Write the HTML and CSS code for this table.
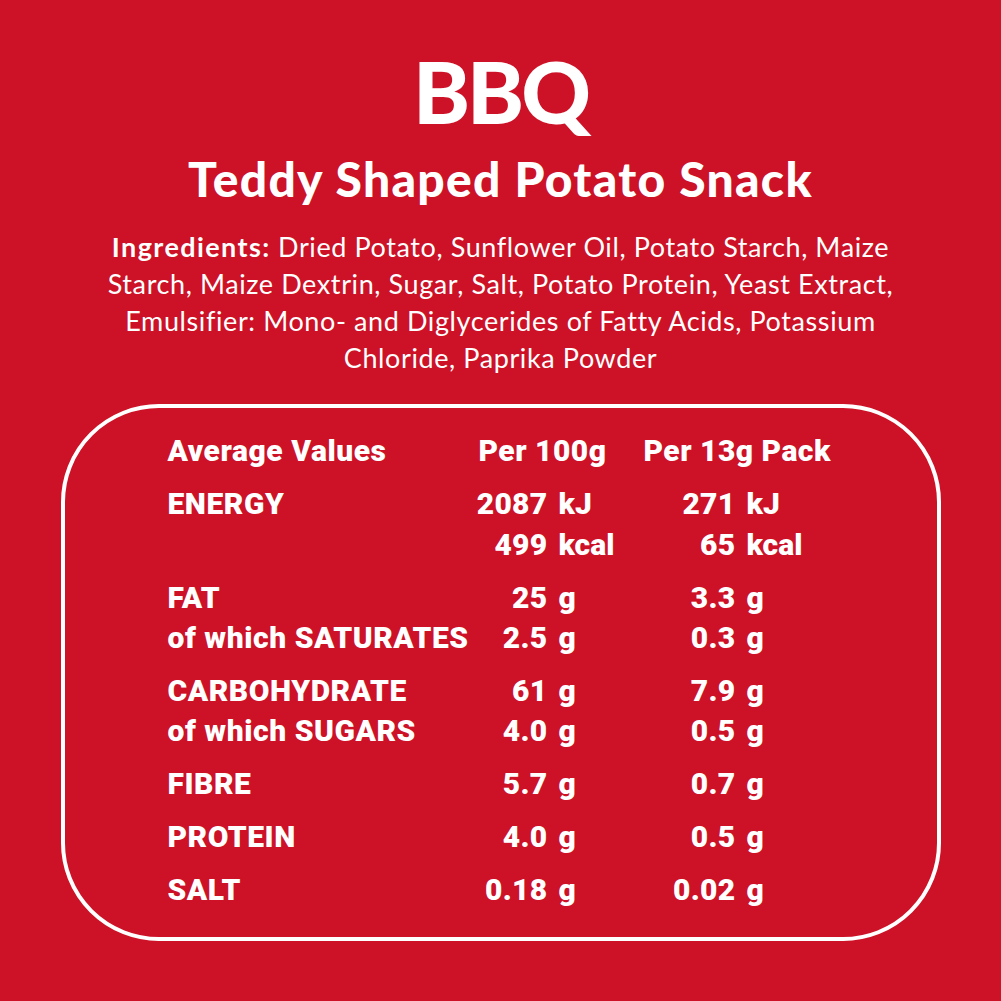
FILE: index.html
```html
<!DOCTYPE html>
<html lang="en">
<head>
<meta charset="utf-8">
<title>BBQ Teddy Shaped Potato Snack</title>
<link rel="stylesheet" href="styles.css">
</head>
<body>
<main class="page">
  <h1 class="title">BBQ</h1>
  <h2 class="subtitle">Teddy Shaped Potato Snack</h2>
  <p class="ingredients"><b>Ingredients:</b> Dried Potato, Sunflower Oil, Potato Starch, Maize<br>Starch, Maize Dextrin, Sugar, Salt, Potato Protein, Yeast Extract,<br>Emulsifier: Mono- and Diglycerides of Fatty Acids, Potassium<br>Chloride, Paprika Powder</p>
  <section class="panel">
    <div class="nutri">
      <div class="lbl">Average Values</div>
      <div class="head h1">Per 100g</div>
      <div class="head h2">Per 13g Pack</div>

      <div class="lbl grp">ENERGY</div>
      <div class="num grp">2087</div><div class="unit grp">kJ</div>
      <div class="num grp">271</div><div class="unit grp">kJ</div>
      <div class="lbl kc"></div>
      <div class="num kc">499</div><div class="unit kc">kcal</div>
      <div class="num kc">65</div><div class="unit kc">kcal</div>

      <div class="lbl grp">FAT</div>
      <div class="num grp">25</div><div class="unit grp">g</div>
      <div class="num grp">3.3</div><div class="unit grp">g</div>
      <div class="lbl">of which SATURATES</div>
      <div class="num">2.5</div><div class="unit">g</div>
      <div class="num">0.3</div><div class="unit">g</div>

      <div class="lbl grp">CARBOHYDRATE</div>
      <div class="num grp">61</div><div class="unit grp">g</div>
      <div class="num grp">7.9</div><div class="unit grp">g</div>
      <div class="lbl">of which SUGARS</div>
      <div class="num">4.0</div><div class="unit">g</div>
      <div class="num">0.5</div><div class="unit">g</div>

      <div class="lbl grp">FIBRE</div>
      <div class="num grp">5.7</div><div class="unit grp">g</div>
      <div class="num grp">0.7</div><div class="unit grp">g</div>

      <div class="lbl grp">PROTEIN</div>
      <div class="num grp">4.0</div><div class="unit grp">g</div>
      <div class="num grp">0.5</div><div class="unit grp">g</div>

      <div class="lbl grp">SALT</div>
      <div class="num grp">0.18</div><div class="unit grp">g</div>
      <div class="num grp">0.02</div><div class="unit grp">g</div>
    </div>
  </section>
</main>
</body>
</html>
```
FILE: styles.css
```css
html, body {
  margin: 0;
  padding: 0;
}
body {
  background: #cd1126;
  color: #fff;
}
.page {
  width: 1001px;
  height: 1001px;
  box-sizing: border-box;
  padding-top: 47px;
  display: flex;
  flex-direction: column;
  align-items: center;
  background: #cd1126;
}
.title {
  margin: 0;
  font-family: "Lato", "Liberation Sans", sans-serif;
  font-weight: 900;
  font-size: 86px;
  line-height: 88px;
  letter-spacing: -3px;
}
.subtitle {
  margin: 20px 0 0;
  font-family: "Lato", "Liberation Sans", sans-serif;
  font-weight: 900;
  font-size: 48px;
  line-height: 47px;
  letter-spacing: 1.3px;
}
.ingredients {
  margin: 26px 0 0;
  font-family: "Lato", "Liberation Sans", sans-serif;
  font-weight: 400;
  font-size: 27px;
  line-height: 37px;
  letter-spacing: 0.6px;
  text-align: center;
}
.ingredients b {
  font-weight: 700;
  letter-spacing: 1.4px;
}
.panel {
  margin-top: 28px;
  width: 880px;
  height: 537px;
  box-sizing: border-box;
  border: 4px solid #fff;
  border-radius: 98px;
  padding: 23px 0 0 103px;
}
.nutri {
  display: grid;
  grid-template-columns: 300px 80px 96px 92px auto;
  font-family: "Roboto", "Liberation Sans", sans-serif;
  font-weight: 900;
  font-size: 30px;
  line-height: 40px;
  white-space: nowrap;
}
.lbl {
  grid-column: 1;
  letter-spacing: 0.55px;
}
.head {
  letter-spacing: 0.5px;
}
.head.h1 {
  grid-column: 2 / span 2;
  padding-left: 11px;
}
.head.h2 {
  grid-column: 4 / span 2;
}
.num {
  text-align: right;
  letter-spacing: 0.3px;
}
.unit {
  padding-left: 11px;
}
.grp {
  padding-top: 13px;
}
.kc {
  padding-top: 1px;
}
```
